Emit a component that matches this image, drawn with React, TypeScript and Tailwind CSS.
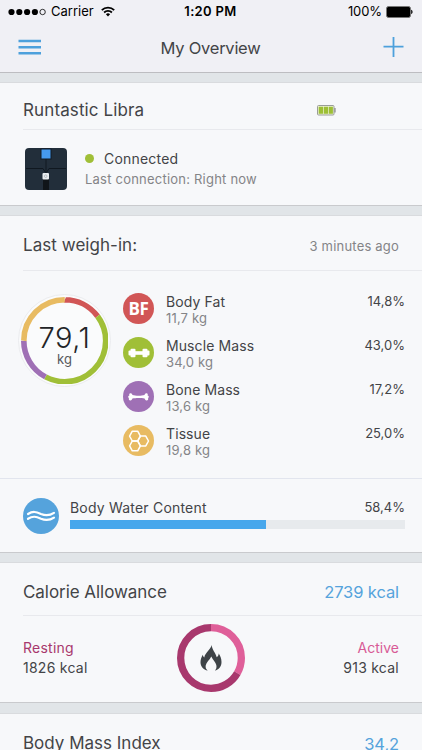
import type { ReactNode } from "react";

type Segment = { value: number; color: string };

const composition: Segment[] = [
  { value: 14.8, color: "#d15656" },
  { value: 43, color: "#a0bf37" },
  { value: 17.2, color: "#9f70b5" },
  { value: 25, color: "#e8bb62" },
];

const calories: Segment[] = [
  { value: 33.3, color: "#df5f99" },
  { value: 66.7, color: "#a8386d" },
];

function Ring({ size, stroke, segments }: { size: number; stroke: number; segments: Segment[] }) {
  const r = (size - stroke) / 2;
  return (
    <svg width={size} height={size} viewBox={`0 0 ${size} ${size}`}>
      <g transform={`rotate(-90 ${size / 2} ${size / 2})`} fill="none">
        {segments.map((s, i) => (
          <circle
            key={s.color}
            cx={size / 2}
            cy={size / 2}
            r={r}
            pathLength={100}
            stroke={s.color}
            strokeWidth={stroke}
            strokeDasharray={`${s.value} ${100 - s.value}`}
            strokeDashoffset={-segments.slice(0, i).reduce((sum, p) => sum + p.value, 0)}
          />
        ))}
      </g>
    </svg>
  );
}

function StatusBar() {
  return (
    <div className="flex h-[23px] items-center justify-between pl-[8px] pr-[9px] text-black">
      <div className="flex w-[150px] items-center">
        <svg width="38" height="8" viewBox="0 0 38 8">
          <circle cx="3.5" cy="4" r="3.1" />
          <circle cx="11.3" cy="4" r="3.1" />
          <circle cx="19.1" cy="4" r="3.1" />
          <circle cx="26.9" cy="4" r="3.1" />
          <circle cx="34.6" cy="4" r="2.7" fill="none" stroke="#000" strokeWidth="0.8" />
        </svg>
        <span className="ml-[5px] text-[13px]">Carrier</span>
        <svg className="ml-[7px]" width="14" height="11" viewBox="0 0 14 11" fill="none" stroke="#000" strokeWidth="1.8">
          <path d="M0.8 4.2a8.8 8.8 0 0 1 12.4 0" />
          <path d="M3.1 6.5a5.5 5.5 0 0 1 7.8 0" />
          <path d="M7 10.4 4.9 8.3a3 3 0 0 1 4.2 0Z" fill="#000" stroke="none" />
        </svg>
      </div>
      <span className="text-[13px] font-semibold tracking-[0.35px]">1:20 PM</span>
      <div className="flex w-[150px] items-center justify-end">
        <span className="mr-[4px] text-[13px] tracking-[-0.1px]">100%</span>
        <svg width="27" height="12" viewBox="0 0 27 12">
          <rect x="0.5" y="0.5" width="24" height="11" rx="2" fill="#000" stroke="#777" />
          <path d="M25.2 3.8c1.8.5 1.8 3.9 0 4.4Z" />
        </svg>
      </div>
    </div>
  );
}

function NavBar() {
  return (
    <div className="flex h-[49px] items-center justify-between px-[18px] pb-[1px]">
      <svg width="24" height="16" viewBox="0 0 24 16" stroke="#4da0dc" strokeWidth="2.6">
        <path d="M0.5 2h22.5M0.5 8.2h22.5M0.5 14.2h22.5" />
      </svg>
      <h1 className="pr-[4px] pt-[3px] text-[16.5px] tracking-[-0.25px]">My Overview</h1>
      <svg width="21" height="20" viewBox="0 0 21 20" stroke="#4da0dc" strokeWidth="1.8">
        <path d="M0.5 9.7h20M10.5 0v20" />
      </svg>
    </div>
  );
}

function Card({ className, children }: { className: string; children: ReactNode }) {
  return (
    <section className={`shrink-0 border-y border-t-[#d9dbde] border-b-[#c9cacd] bg-[#f7f8fa] ${className}`}>
      {children}
    </section>
  );
}

function ScaleImage() {
  return (
    <svg width="42" height="42" viewBox="0 0 42 42">
      <rect width="42" height="42" rx="4" fill="#222e3a" />
      <path d="M1 20.5h17l2.5 4M41 20.5H24l-2.5 4M21 10v16" fill="none" stroke="#101820" strokeWidth="1" />
      <rect x="18" y="30" width="6" height="12" fill="#101519" />
      <rect x="15.5" y="0.5" width="11" height="11" fill="#111b27" />
      <rect x="16.5" y="1.5" width="9" height="9" fill="#4599ee" />
      <rect x="17.5" y="25" width="6.5" height="6.5" rx="1" fill="#e9edf0" />
      <circle cx="20.7" cy="28.2" r="1.3" fill="none" stroke="#9ba1a6" strokeWidth="0.6" />
    </svg>
  );
}

function BatteryIcon() {
  return (
    <svg width="19" height="11" viewBox="0 0 19 11">
      <rect x="0.5" y="0.5" width="16.5" height="9.5" rx="1" fill="#eef3d6" stroke="#9a9d98" />
      <path d="M17.5 3h1v4.5h-1Z" fill="#777" />
      <path d="M1.7 1.8h4.3v7H1.7ZM6.7 1.8h4.3v7H6.7ZM11.7 1.8h4.2v7h-4.2Z" fill="#9dbf35" />
    </svg>
  );
}

function Dumbbell() {
  return (
    <svg width="22" height="12" viewBox="0 0 22 12" fill="#fff">
      <rect x="0.5" y="3.5" width="3" height="5" rx="1" />
      <rect x="2.5" y="1.8" width="5" height="8.4" rx="1" />
      <rect x="6" y="4.2" width="10" height="3.6" />
      <rect x="14.5" y="1.8" width="5" height="8.4" rx="1" />
      <rect x="18.5" y="3.5" width="3" height="5" rx="1" />
    </svg>
  );
}

function Bone() {
  return (
    <svg width="23" height="10" viewBox="0 0 22 10" fill="#fff">
      <path d="M5 3C8 4 14 4 17 3C17.2 1.8 18.1.9 19.2 1.2C20.3 1.5 20.5 2.6 20.1 3.4C21.6 3.6 21.8 5.4 20.5 6C21.2 7.2 20.3 8.7 19 8.5C17.9 8.3 17.5 7.4 17.1 6.5C14 5.7 8 5.7 4.9 6.5C4.5 7.4 4.1 8.3 3 8.5C1.7 8.7.8 7.2 1.5 6C.2 5.4.4 3.6 1.9 3.4C1.5 2.6 1.7 1.5 2.8 1.2C3.9.9 4.8 1.8 5 3Z" />
    </svg>
  );
}

function Honeycomb() {
  return (
    <svg width="22" height="22" viewBox="0 0 22 22" fill="none" stroke="#fff" strokeWidth="1.5" strokeLinejoin="round">
      <path d="M4.3 1.2h5.4l2.7 4.9-2.7 4.9H4.3L1.6 6.1Z" />
      <path d="M4.3 11h5.4l2.7 4.9-2.7 4.9H4.3L1.6 15.9Z" />
      <path d="M12.4 6.1h5.4l2.7 4.9-2.7 4.9h-5.4L9.7 11Z" />
    </svg>
  );
}

function Flame() {
  return (
    <svg width="22" height="26" viewBox="0 0 22 26">
      <path
        d="M11.7 0C12 5 15.500 7.500 16.700 12.200C18 11.500 18.600 10.200 18.700 8.500C20.200 10.700 21.500 13.500 21.500 17C21.500 21.500 18.800 24.800 14.800 25.600C16.300 24.300 16.800 22.300 16.300 20C15.600 17 13 15 11.300 11.500C9.600 15 6.300 17.200 5.700 20.500C5.300 22.500 6.200 24.500 7.700 25.600C3.500 24.800.5 21.600.5 17.300C.5 14.400 1.500 12.200 2.800 9.800C3.100 11.200 3.500 12 4.300 12.500C5 7.500 10.500 5 11.700 0Z"
        fill="#3e4347"
      />
    </svg>
  );
}

const rows = [
  { name: "Body Fat", mass: "11,7 kg", share: "14,8%", bg: "bg-[#d15656]", icon: <span className="font-['Open_Sans'] text-[17px] font-bold tracking-[-0.5px] text-white">BF</span> },
  { name: "Muscle Mass", mass: "34,0 kg", share: "43,0%", bg: "bg-[#a0bf37]", icon: <Dumbbell /> },
  { name: "Bone Mass", mass: "13,6 kg", share: "17,2%", bg: "bg-[#9f70b5]", icon: <Bone /> },
  { name: "Tissue", mass: "19,8 kg", share: "25,0%", bg: "bg-[#e8bb62]", icon: <Honeycomb /> },
];

function LastWeighIn() {
  return (
    <Card className="h-[338px]">
      <div className="ml-[23px] flex h-[55px] items-center justify-between border-b border-[#e8e9ed] pr-[23px] pt-[5px]">
        <h2 className="text-[17px] tracking-[0.05px]">Last weigh-in:</h2>
        <span className="pt-[2px] text-[13px] tracking-[0.2px] text-[#848487]">3 minutes ago</span>
      </div>
      <div className="flex h-[207px] pl-[18px] pr-[17px] pt-[22px]">
        <div className="mt-[1px] grid size-[93px] shrink-0 place-items-center rounded-full border border-[#ebecef] bg-[#fafbfc]">
          <div className="col-start-1 row-start-1 flex">
            <Ring size={87.5} stroke={5.6} segments={composition} />
          </div>
          <div className="col-start-1 row-start-1 flex flex-col items-center pt-[9px]">
            <span className="text-[29px] font-light leading-[29px] tracking-[0.6px] text-[#222427]">79,1</span>
            <span className="text-[13px] leading-[15px] text-[#57585b]">kg</span>
          </div>
        </div>
        <div className="ml-[12px] flex-1">
          {rows.map((row) => (
            <div key={row.name} className="flex h-[44px]">
              <div className={`flex size-[31px] shrink-0 items-center justify-center rounded-full ${row.bg}`}>{row.icon}</div>
              <div className="ml-[12px]">
                <div className="text-[14px] leading-[17px] tracking-[0.1px]">{row.name}</div>
                <div className="text-[13px] leading-[16px] tracking-[0.15px] text-[#848487]">{row.mass}</div>
              </div>
              <span className="ml-auto text-[13px] leading-[16px]">{row.share}</span>
            </div>
          ))}
        </div>
      </div>
      <div className="flex border-t border-[#e2e5ee] pl-[23px] pr-[17px] pt-[19px]">
        <div className="flex size-[36px] shrink-0 items-center justify-center rounded-full bg-[#55a3dc]">
          <svg width="30" height="14" viewBox="0 0 30 14" fill="none" stroke="#fff" strokeWidth="2.2" strokeLinecap="round">
            <path d="M2 5C7 1.8 10 2.8 15 5C20 7 24 6.500 28 3.800" />
            <path d="M2 9.800C7 6.600 10 7.600 15 9.800C20 11.800 24 11.300 28 8.600" />
          </svg>
        </div>
        <div className="ml-[11px] flex-1">
          <div className="flex h-[22px] items-center justify-between pb-[3px]">
            <span className="text-[14px] tracking-[0.2px]">Body Water Content</span>
            <span className="text-[13px]">58,4%</span>
          </div>
          <div className="h-[9px] bg-[#e7eaed]">
            <div className="h-full w-[58.4%] bg-[#47a7ec]" />
          </div>
        </div>
      </div>
    </Card>
  );
}

export default function App() {
  return (
    <div className="flex h-[750px] w-[422px] flex-col overflow-hidden bg-[#e1e5e8] font-['Inter','Liberation_Sans',sans-serif] text-[#434447]">
      <header className="h-[73px] shrink-0 border-b border-[#bdbdc1] bg-[#f0f0f5]">
        <StatusBar />
        <NavBar />
      </header>

      <Card className="mt-[9px] h-[124px]">
        <div className="ml-[23px] flex h-[47px] items-center border-b border-[#e8e9ed] pt-[9px]">
          <h2 className="w-[294px] text-[17px] tracking-[0.12px]">Runtastic Libra</h2>
          <BatteryIcon />
        </div>
        <div className="flex pl-[25px] pt-[18px]">
          <ScaleImage />
          <div className="ml-[18px]">
            <div className="flex items-center leading-[21px]">
              <span className="mr-[10px] size-[9px] rounded-full bg-[#a0bf37]" />
              <span className="text-[14px] tracking-[0.2px]">Connected</span>
            </div>
            <div className="text-[13px] leading-[21px] tracking-[0.22px] text-[#848487]">Last connection: Right now</div>
          </div>
        </div>
      </Card>

      <div className="h-[9px] shrink-0" />
      <LastWeighIn />

      <Card className="mt-[9px] h-[141px]">
        <div className="ml-[23px] flex h-[53px] items-center justify-between border-b border-[#e8e9ed] pr-[23px] pt-[7px]">
          <h2 className="text-[17px] tracking-[-0.05px]">Calorie Allowance</h2>
          <span className="text-[16.5px] tracking-[-0.1px] text-[#55a3dc]">2739 kcal</span>
        </div>
        <div className="flex justify-between px-[23px] pt-[8px]">
          <div className="w-[150px] pt-[14px] text-[14px] leading-[20px] tracking-[0.25px]">
            <div className="text-[#a8386d]">Resting</div>
            <div>1826 kcal</div>
          </div>
          <div className="grid place-items-center">
            <div className="col-start-1 row-start-1 flex">
              <Ring size={68} stroke={7.3} segments={calories} />
            </div>
            <div className="col-start-1 row-start-1">
              <Flame />
            </div>
          </div>
          <div className="w-[150px] pt-[14px] text-right text-[14px] leading-[20px]">
            <div className="text-[#d85b96]">Active</div>
            <div className="tracking-[0.25px]">913 kcal</div>
          </div>
        </div>
      </Card>

      <Card className="mt-[10px] h-[80px]">
        <div className="flex h-[60px] items-center justify-between px-[23px]">
          <h2 className="text-[17px]">Body Mass Index</h2>
          <span className="text-[16.5px] tracking-[-0.1px] text-[#55a3dc]">34,2</span>
        </div>
      </Card>
    </div>
  );
}
